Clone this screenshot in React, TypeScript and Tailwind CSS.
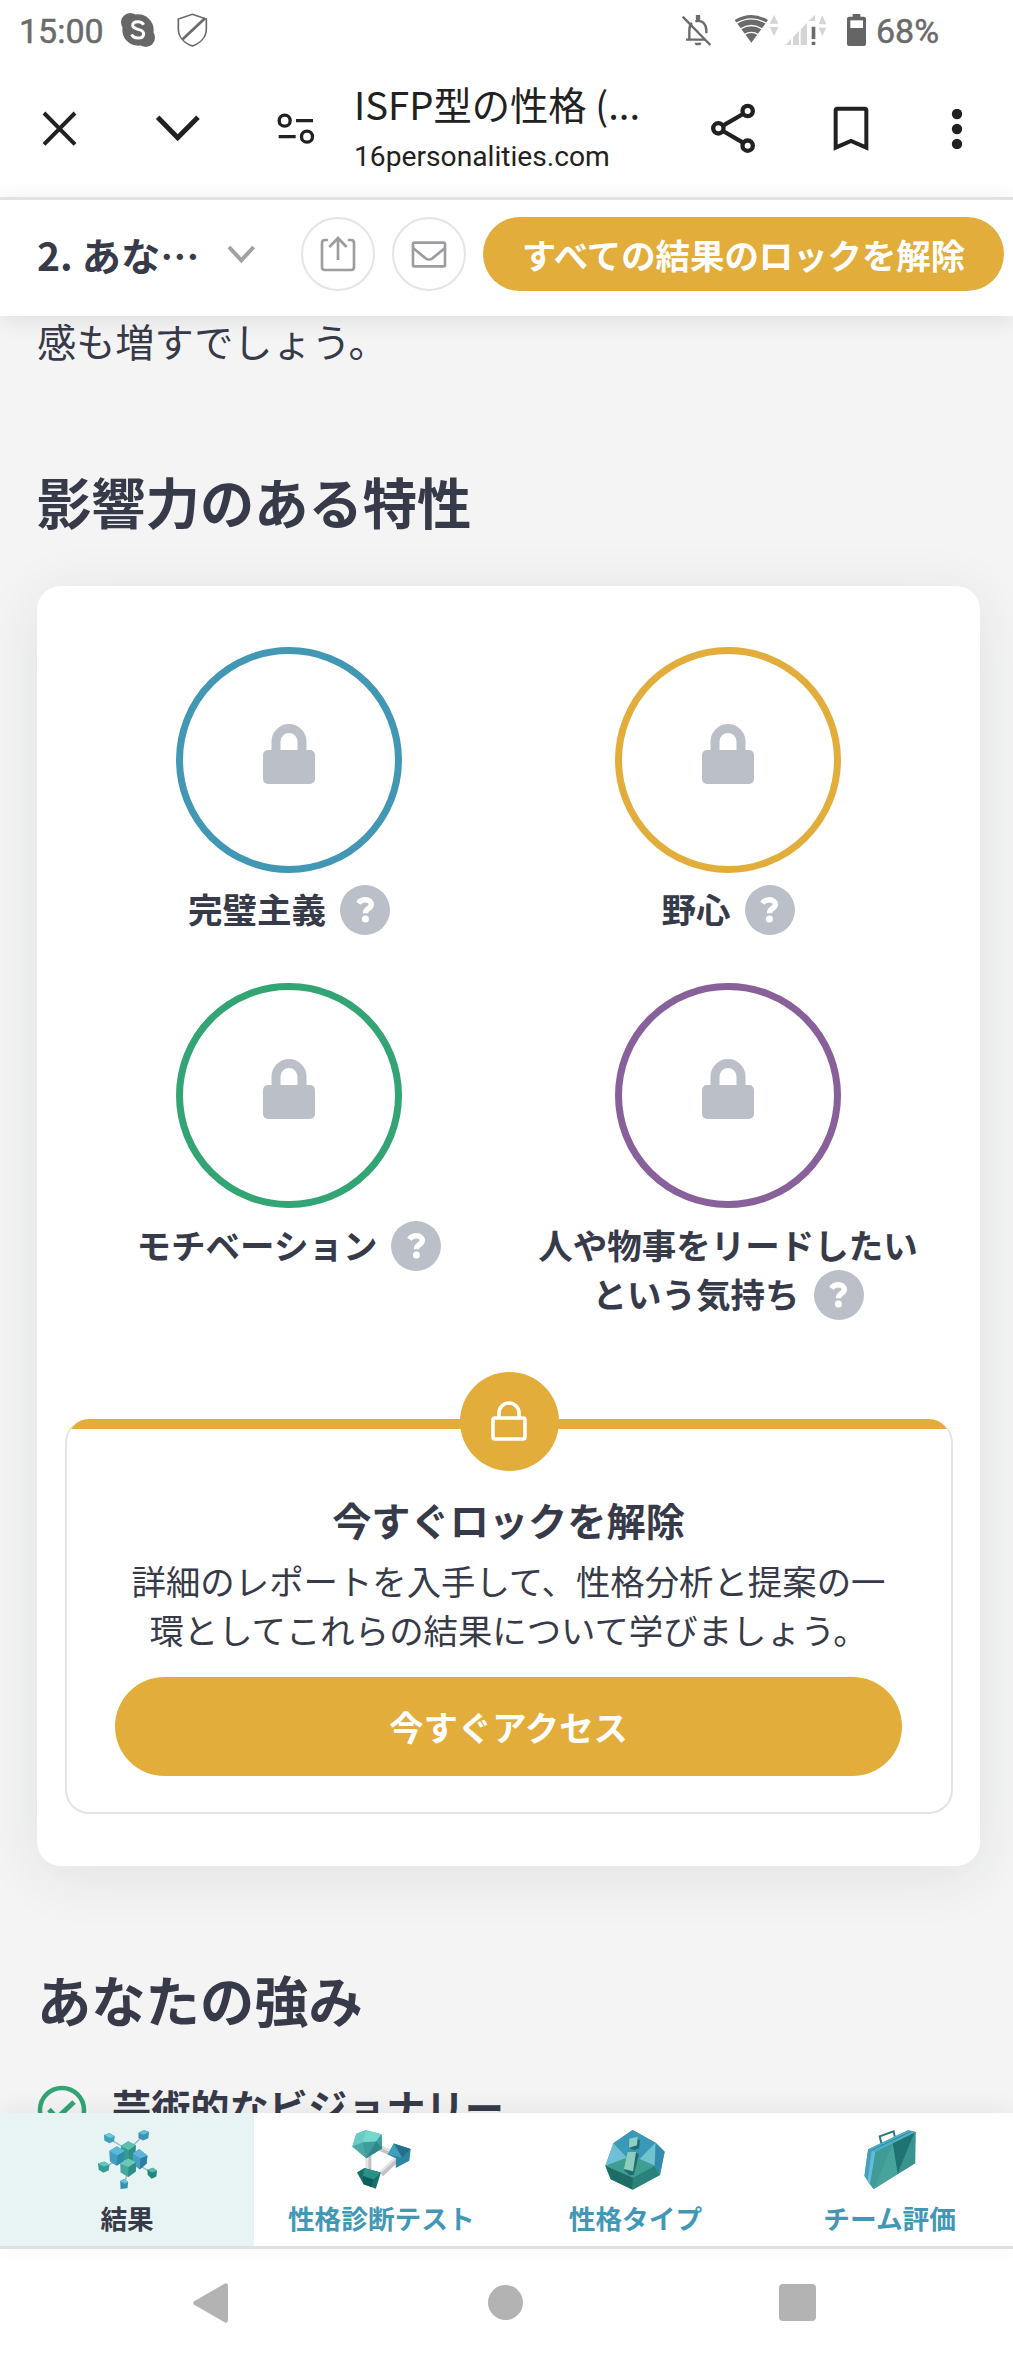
import * as React from 'react';

interface Trait {
  lines: string[];
  ring: string;
}

interface Tab {
  label: string;
  icon: React.ReactNode;
  active?: boolean;
}

// Constants
const TRAITS: Trait[] = [
  { lines: ['完璧主義'], ring: 'border-[#4298b4]' },
  { lines: ['野心'], ring: 'border-[#e2ad3b]' },
  { lines: ['モチベーション'], ring: 'border-[#33a474]' },
  { lines: ['人や物事をリードしたい', 'という気持ち'], ring: 'border-[#88619a]' },
];

// Status bar
const StatusBar: React.FC = () => (
  <div className="flex h-[60px] shrink-0 items-center pl-[19px] font-['Roboto'] text-[34px] leading-none font-medium text-[#6b6b6b]">
    <span className="mt-[2px] w-[102px] font-normal [-webkit-text-stroke:0.5px]">15:00</span>
    <svg className="-mt-px h-[34px] w-[34px]" viewBox="363 38 102 102">
      <circle cx="414" cy="89" r="47" fill="#676767" />
      <circle cx="391" cy="66" r="28" fill="#676767" />
      <circle cx="437" cy="112" r="28" fill="#676767" />
      <path
        d="M431 73c-4-7-10-9-17-9-9 0-16 4-16 11 0 16 33 8 33 25 0 9-8 13-17 13s-16-4-19-11"
        fill="none"
        stroke="#fff"
        strokeWidth="9"
      />
    </svg>
    <svg className="-mt-px ml-[22px] h-[34px] w-[31px]" viewBox="531 37 93 102" fill="none" stroke="#6b6b6b">
      <path d="M577 41 619 55V84C619 108 602 127 577 136 552 127 535 108 535 84V55Z" strokeWidth="5" />
      <path d="M548 116 615 53" strokeWidth="8" />
    </svg>
    <svg className="ml-[473px] h-[31px] w-[31px]" viewBox="526 43 93 93" fill="none" stroke="#6b6b6b" strokeWidth="7">
      <path d="M551 118V88C551 79 554 71 559 67M569 62C588 56 602 70 602 89V98M541 117H598" />
      <path d="M531 48 614 133" />
      <path d="M577 45V55" strokeWidth="13" strokeLinecap="round" />
      <path d="M567 126H587A10 8 0 0 1 567 126Z" fill="#6b6b6b" stroke="none" />
    </svg>
    <svg className="-mt-1 ml-[22px] h-[29px] w-[45px]" viewBox="685 41 135 87" fill="none">
      <path d="M737 127 687 59Q737 29 787 59Z" fill="#6b6b6b" />
      <path d="M692 69Q737 42 782 69M704 86Q737 65 770 86M716 103Q737 89 758 103" stroke="#fff" strokeWidth="4" />
      <path d="M792 70 805 44 818 70ZM792 80 805 107 818 80Z" fill="#d5d5d5" />
    </svg>
    <svg className="ml-[6px] h-[32px] w-[43px]" viewBox="842 39 129 96">
      <path
        d="M843 132 860 114V132ZM866 108 884 90V132H866ZM889 85 908 66V132H889ZM913 60 932 41V60Z"
        fill="#d5d5d5"
      />
      <path d="M943 70 954 43 966 70ZM943 80 954 105 966 80Z" fill="#d5d5d5" />
      <path d="M922 77H933V114H922ZM922 122H933V132H922Z" fill="#6b6b6b" />
    </svg>
    <svg className="ml-[19px] h-[32px] w-[19px]" viewBox="1026 39 57 96">
      <path
        d="M1043 39H1066V47H1077Q1083 47 1083 53V129Q1083 135 1077 135H1032Q1026 135 1026 129V53Q1026 47 1032 47H1043Z"
        fill="#656565"
      />
      <path d="M1036 58H1074V81H1036Z" fill="#fff" />
    </svg>
    <span className="mt-[2px] ml-[10px] font-normal [-webkit-text-stroke:0.5px]">68%</span>
  </div>
);

// Browser toolbar
const Toolbar: React.FC = () => (
  <div className="flex h-[137px] shrink-0 items-center pl-[42px] text-[#212121]">
    <svg className="h-[35px] w-[35px] shrink-0" viewBox="126 331 105 105" stroke="currentColor" strokeWidth="12">
      <path d="M132 337 225 431M225 337 132 431" />
    </svg>
    <svg
      className="ml-[78px] h-[27px] w-[46px] shrink-0"
      viewBox="465 344 138 81"
      fill="none"
      stroke="currentColor"
      strokeWidth="15"
    >
      <path d="M473 351 533 412 594 351" />
    </svg>
    <svg
      className="ml-[76px] h-[32px] w-[38px] shrink-0"
      viewBox="831 337 114 96"
      fill="none"
      stroke="currentColor"
      strokeWidth="10"
    >
      <circle cx="854" cy="360" r="16.5" />
      <circle cx="921" cy="408" r="16.5" />
      <path d="M888 360H939M836 408H887" />
    </svg>
    <div className="ml-[39px] -mt-[5px] w-[356px] shrink-0 whitespace-nowrap">
      <div className="text-[38.3px] leading-[52px]">ISFP型の性格 (...</div>
      <div className="mt-[9px] font-['Roboto'] text-[28.2px] leading-[36px]">16personalities.com</div>
    </div>
    <svg
      className="h-[51px] w-[46px] shrink-0"
      viewBox="615 308 138 153"
      fill="none"
      stroke="currentColor"
      strokeWidth="13"
    >
      <circle cx="728" cy="332" r="15.5" />
      <circle cx="728" cy="436" r="15.5" />
      <circle cx="640" cy="384" r="15.5" />
      <path d="M654 376 714 341M654 392 714 427" />
    </svg>
    <svg
      className="ml-[77px] h-[46px] w-[36px] shrink-0"
      viewBox="982 316 108 138"
      fill="none"
      stroke="currentColor"
      strokeWidth="12"
    >
      <path d="M990 441V329Q990 324 995 324H1077Q1082 324 1082 329V441L1036 421Z" />
    </svg>
    <svg className="ml-[82px] h-[40px] w-[12px] shrink-0" viewBox="1336 324 36 120" fill="currentColor">
      <circle cx="1354" cy="339" r="15.5" />
      <circle cx="1354" cy="384" r="15.5" />
      <circle cx="1354" cy="429" r="15.5" />
    </svg>
  </div>
);

// Sticky section bar under the browser toolbar
const SectionBar: React.FC = () => (
  <div className="z-10 flex h-[119px] shrink-0 items-center border-t-[3px] border-[#e2e2e2] bg-white pb-[8px] pl-[37px] shadow-[0_4px_22px_rgba(0,0,0,0.09)]">
    <span className="w-[190px] text-[39.2px] leading-[60px] font-bold whitespace-nowrap">2. あな…</span>
    <svg className="h-[19px] w-[29px]" viewBox="681 151 87 57" fill="none" stroke="#a0a1a4" strokeWidth="12">
      <path d="M687 157 724 197 761 157" />
    </svg>
    <div className="ml-[45px] flex size-[74px] items-center justify-center rounded-full border-2 border-[#e4e5e6]">
      <svg className="h-[36px] w-[36px]" viewBox="960 124 108 108" fill="none" stroke="#9c9da0" strokeWidth="8">
        <path
          d="M981 136H975Q966 136 966 145V217Q966 226 975 226H1053Q1062 226 1062 217V145Q1062 136 1053 136H1047"
          strokeLinecap="round"
        />
        <path d="M1014 196V130M988 157 1014 130 1040 157" />
      </svg>
    </div>
    <div className="ml-[17px] flex size-[74px] items-center justify-center rounded-full border-2 border-[#e4e5e6]">
      <svg className="h-[27px] w-[36px]" viewBox="1233 137 108 81" fill="none" stroke="#9c9da0" strokeWidth="8">
        <rect x="1239" y="142" width="96" height="71" rx="4" />
        <path d="M1240 159 1277 189Q1287 196 1297 189L1334 159" />
      </svg>
    </div>
    <div className="ml-[17px] flex h-[74.5px] w-[521px] items-center justify-center rounded-full bg-[#e2ad3b] text-[34.4px] leading-none font-bold whitespace-nowrap text-white">
      すべての結果のロックを解除
    </div>
  </div>
);

const QuestionBadge: React.FC = () => (
  <span className="ml-[14px] flex size-[50px] items-center justify-center rounded-full bg-[#bbbfc7]">
    <svg className="h-[26px] w-[19px]" viewBox="0 0 19 26" fill="none" stroke="#fff" strokeWidth="5.4">
      <path d="M2.4 6.2C4.2 3.6 6.5 2.7 9.3 2.7 12.8 2.7 15.3 4.6 15.3 7.6 15.3 11.8 9.4 11.4 9.4 16.2" />
      <circle cx="9.4" cy="22" r="3.5" fill="#fff" stroke="none" />
    </svg>
  </span>
);

const TraitItem: React.FC<{ trait: Trait }> = ({ trait }) => (
  <div className="flex flex-col items-center">
    <div className={`flex size-[225.5px] items-center justify-center rounded-full border-[7px] ${trait.ring}`}>
      <svg className="-mt-[12px] h-[60px] w-[52px]" viewBox="0 0 52 60">
        <rect y="26" width="52" height="34" rx="5" fill="#bbbfc7" />
        <path d="M13 30V17.5A13 13 0 0 1 39 17.5V30" fill="none" stroke="#bbbfc7" strokeWidth="9" />
      </svg>
    </div>
    <div className="mt-[13px] text-[34.5px] leading-none font-bold whitespace-nowrap">
      {trait.lines.map((line, i) => (
        <div key={line} className="flex h-[49px] items-center justify-center">
          <span className="-mt-[3px]">{line}</span>
          {i === trait.lines.length - 1 && <QuestionBadge />}
        </div>
      ))}
    </div>
  </div>
);

const UnlockBox: React.FC = () => (
  <div className="relative mt-[99.5px] mr-[27.5px] ml-[27.5px]">
    <div className="flex flex-col items-center overflow-hidden rounded-[24px] border-x-2 border-b-2 border-[#e2e4e5] pb-[36.5px] text-center">
      <div className="h-[10px] w-full bg-[#e2ad3b]" />
      <h3 className="mt-[65px] text-[39.2px] leading-[50px] font-bold">今すぐロックを解除</h3>
      <p className="mt-[12px] text-[34.4px] leading-[49px] whitespace-nowrap">
        詳細のレポートを入手して、性格分析と提案の一
        <br />
        環としてこれらの結果について学びましょう。
      </p>
      <div className="mt-[23.5px] flex h-[98.5px] w-[787px] items-center justify-center rounded-full bg-[#e2ad3b] text-[34.4px] leading-none font-bold text-white">
        今すぐアクセス
      </div>
    </div>
    <div className="absolute -top-[46.5px] left-[395.5px] flex size-[98.5px] items-center justify-center rounded-full bg-[#e2ad3b]">
      <svg className="h-[40px] w-[36px]" viewBox="0 0 36 40" fill="none" stroke="#fff" strokeWidth="3.6">
        <rect x="2" y="17" width="32" height="21" rx="2" />
        <path d="M8 17V12A10 10 0 0 1 28 12V17" />
      </svg>
    </div>
  </div>
);

// Tab icons
const ResultsIcon: React.FC = () => (
  <svg className="size-[59px]" viewBox="293 569 178 178">
    <path d="M327 595 384 630 431 585M309 682 350 662M457 700 410 670M372 734 384 690" fill="none" stroke="#8fb9c4" strokeWidth="4" />
    <path d="M311 584 328 578 344 588 341 604 327 609 312 601Z" fill="#45a0bd" />
    <path d="M311 584 328 578 344 588 329 593Z" fill="#6fc6dd" />
    <path d="M415 577 432 569 447 575 445 594 429 601 415 593Z" fill="#3c93b5" />
    <path d="M415 577 432 569 447 575 431 583Z" fill="#68bcd8" />
    <path d="M293 670 312 664 328 674 325 691 309 698 295 689Z" fill="#359b95" />
    <path d="M293 670 312 664 328 674 310 679Z" fill="#64c6b9" />
    <path d="M442 689 459 683 471 692 469 709 455 716 443 705Z" fill="#258580" />
    <path d="M442 689 459 683 471 692 456 697Z" fill="#58bfae" />
    <path d="M360 723 372 717 384 726 382 745 361 747Z" fill="#358fb0" />
    <path d="M360 723 372 717 384 726 373 731Z" fill="#65c1dc" />
    <path d="M362 617 384 603 407 615 404 665 382 672 364 650Z" fill="#379b91" />
    <path d="M362 617 384 603 407 615 386 630Z" fill="#5bc0ad" />
    <path d="M386 630 407 615 404 665 386 662Z" fill="#2f8f86" />
    <path d="M327 632 350 618 374 632 371 663 349 677 329 664Z" fill="#419fc0" />
    <path d="M327 632 350 618 374 632 352 645Z" fill="#5cb9d6" />
    <path d="M352 645 374 632 371 663 349 677Z" fill="#2f8aab" />
    <path d="M398 640 417 626 442 646 440 670 419 688 398 673Z" fill="#459fc6" />
    <path d="M398 640 417 626 442 646 421 655Z" fill="#5db5d8" />
    <path d="M421 655 442 646 440 670 419 688Z" fill="#2f7da5" />
    <path d="M360 670 384 655 408 666 407 694 384 711 361 697Z" fill="#45aa9d" />
    <path d="M360 670 384 655 408 666 385 681Z" fill="#68c9b9" />
    <path d="M385 681 408 666 407 694 384 711Z" fill="#2e8f87" />
  </svg>
);

const TestIcon: React.FC = () => (
  <svg className="size-[59px]" viewBox="1055 569 178 178">
    <path d="M1128 618 1172 638M1105 645V693M1143 702 1196 652" fill="none" stroke="#c3c1c5" strokeWidth="17" />
    <path d="M1128 613 1172 633M1101 645V690M1140 697 1193 647" fill="none" stroke="#e4e3e5" strokeWidth="7" />
    <path d="M1068 580 1097 570 1144 582 1146 624 1098 654 1056 619Z" fill="#49aaa8" />
    <path d="M1068 580 1097 570 1144 582 1128 604 1087 608Z" fill="#75d8cf" />
    <path d="M1068 580 1097 570 1087 612 1056 619Z" fill="#68cbc4" />
    <path d="M1056 619 1087 606 1098 654Z" fill="#4ba9a8" />
    <path d="M1144 582 1146 624 1098 654 1087 606 1128 604Z" fill="#3f9b9c" />
    <path d="M1128 604 1146 624 1098 654Z" fill="#2f8789" />
    <path d="M1181 610 1232 626 1228 662 1187 684 1188 655 1163 643Z" fill="#2b86a3" />
    <path d="M1181 610 1232 626 1206 652Z" fill="#256f8d" />
    <path d="M1181 610 1206 652 1163 643Z" fill="#3e9fbd" />
    <path d="M1070 697 1092 684 1142 697 1127 746 1090 733Z" fill="#177069" />
    <path d="M1092 684 1142 697 1120 718 1088 708Z" fill="#2a9187" />
    <path d="M1088 708 1120 718 1113 741 1090 733Z" fill="#0e5f5b" />
  </svg>
);

const TypesIcon: React.FC = () => (
  <svg className="size-[60px]" viewBox="300 119 180 180">
    <path d="M383 119 452 157 479 184 465 254 383 298 317 267 301 226 325 159Z" fill="#57b0be" />
    <path d="M383 119 452 157 404 206 325 159Z" fill="#3c98b8" />
    <path d="M325 159 370 206 301 226Z" fill="#6fc0d6" />
    <path d="M325 159 362 173 380 200 370 206Z" fill="#3b9db5" />
    <path d="M452 157 404 206 449 226Z" fill="#70c2cf" />
    <path d="M452 157 479 184 465 254 449 226Z" fill="#328cae" />
    <path d="M404 206 449 226 384 262 301 226 365 202Z" fill="#409d92" />
    <path d="M301 226 384 262 383 298 317 267Z" fill="#1d6c66" />
    <path d="M384 262 449 226 465 254 383 298Z" fill="#2a827a" />
    <path d="M392 143 405 150 403 174 388 180 372 172Z" fill="#216d78" />
    <path d="M373 145 398 139 396 165 372 172Z" fill="#8cd0c4" />
    <path d="M391 185 402 192 386 254 374 255 357 240Z" fill="#216d6d" />
    <path d="M368 185 393 185 384 243 357 236Z" fill="#8dcdbd" />
  </svg>
);

const TeamIcon: React.FC = () => (
  <svg className="h-[59px] w-[52px]" viewBox="1073 119 156 178">
    <path d="M1126 164 1120 138 1162 123 1167 146" fill="none" stroke="#2b7b79" strokeWidth="6" />
    <path d="M1085 177 1205 120 1229 125 1227 219 1102 297 1074 258Z" fill="#3d9995" />
    <path d="M1085 177 1205 120 1229 125 1107 186Z" fill="#4eafc7" />
    <path d="M1085 177 1107 186 1091 284 1074 258Z" fill="#43a0bd" />
    <path d="M1096 181 1107 186 1091 284 1083 271Z" fill="#65bcda" />
    <path d="M1107 186 1159 160 1102 297 1091 284Z" fill="#3f9a98" />
    <path d="M1159 160 1225 127 1174 252Z" fill="#1f7370" />
    <path d="M1159 160 1174 252 1102 297Z" fill="#46a49c" />
    <path d="M1225 127 1227 219 1174 252Z" fill="#3b938e" />
    <path d="M1095 180 1215 123" fill="none" stroke="#2e8399" strokeWidth="3" />
  </svg>
);

const TABS: Tab[] = [
  { label: '結果', icon: <ResultsIcon />, active: true },
  { label: '性格診断テスト', icon: <TestIcon /> },
  { label: '性格タイプ', icon: <TypesIcon /> },
  { label: 'チーム評価', icon: <TeamIcon /> },
];

const BottomTabs: React.FC = () => (
  <div className="z-10 grid h-[136px] shrink-0 grid-cols-[repeat(4,254.2px)] border-b-[3px] border-[#e0e0e0] bg-white shadow-[0_-4px_22px_rgba(0,0,0,0.06)]">
    {TABS.map((tab) => (
      <div
        key={tab.label}
        className={`flex flex-col items-center pt-[17px] ${tab.active ? 'bg-[#e8f4f4]' : 'text-[#4298b4]'}`}
      >
        <div className="flex h-[59px] items-center">{tab.icon}</div>
        <span className="mt-[11px] text-[26.7px] leading-[36px] font-bold whitespace-nowrap">{tab.label}</span>
      </div>
    ))}
  </div>
);

const SystemNav: React.FC = () => (
  <div className="flex h-[115px] shrink-0 items-center bg-white pb-[8px] pl-[193px]">
    <svg className="h-[40px] w-[35px]" viewBox="0 0 35 40" fill="#b3b3b3">
      <path d="M32 .5Q35-.5 35 3V37Q35 40.500 32 39.500L1.500 22Q-1 20 1.500 18Z" />
    </svg>
    <div className="ml-[260px] size-[35px] rounded-full bg-[#b3b3b3]" />
    <div className="ml-[256px] size-[37px] rounded-[4px] bg-[#b3b3b3]" />
  </div>
);

export default function App() {
  return (
    <div
      lang="ja"
      className="flex h-[2364px] w-[1013px] flex-col overflow-hidden bg-white font-['Noto_Sans_CJK_JP',sans-serif] text-[#373a49]"
    >
      <StatusBar />
      <Toolbar />
      <SectionBar />
      <main className="min-h-0 flex-1 overflow-hidden bg-[#f4f4f4] pl-[37px]">
        <p className="text-[39.2px] leading-[49px]">感も増すでしょう。</p>
        <h2 className="mt-[101px] text-[54.3px] leading-[70px] font-bold">影響力のある特性</h2>
        <section className="mt-[49.5px] w-[943px] rounded-[24px] bg-white pt-[61.5px] pb-[51.5px] shadow-[0_10px_60px_rgba(30,40,50,0.09)]">
          <div className="grid grid-cols-2 gap-y-[48px] px-[32.5px]">
            {TRAITS.map((trait) => (
              <TraitItem key={trait.ring} trait={trait} />
            ))}
          </div>
          <UnlockBox />
        </section>
        <h2 className="mt-[98px] text-[54.3px] leading-[70px] font-bold">あなたの強み</h2>
        <div className="mt-[51px] flex h-[50px] items-center">
          <svg className="size-[50px]" viewBox="0 0 50 50" fill="none" stroke="#33a474">
            <circle cx="25" cy="25" r="22" strokeWidth="4.500" />
            <path d="M12 24.500 20 33 37 17" strokeWidth="5" />
          </svg>
          <span className="-mt-[5px] ml-[25px] text-[39.2px] leading-none font-bold">芸術的なビジョナリー</span>
        </div>
      </main>
      <BottomTabs />
      <SystemNav />
    </div>
  );
}
